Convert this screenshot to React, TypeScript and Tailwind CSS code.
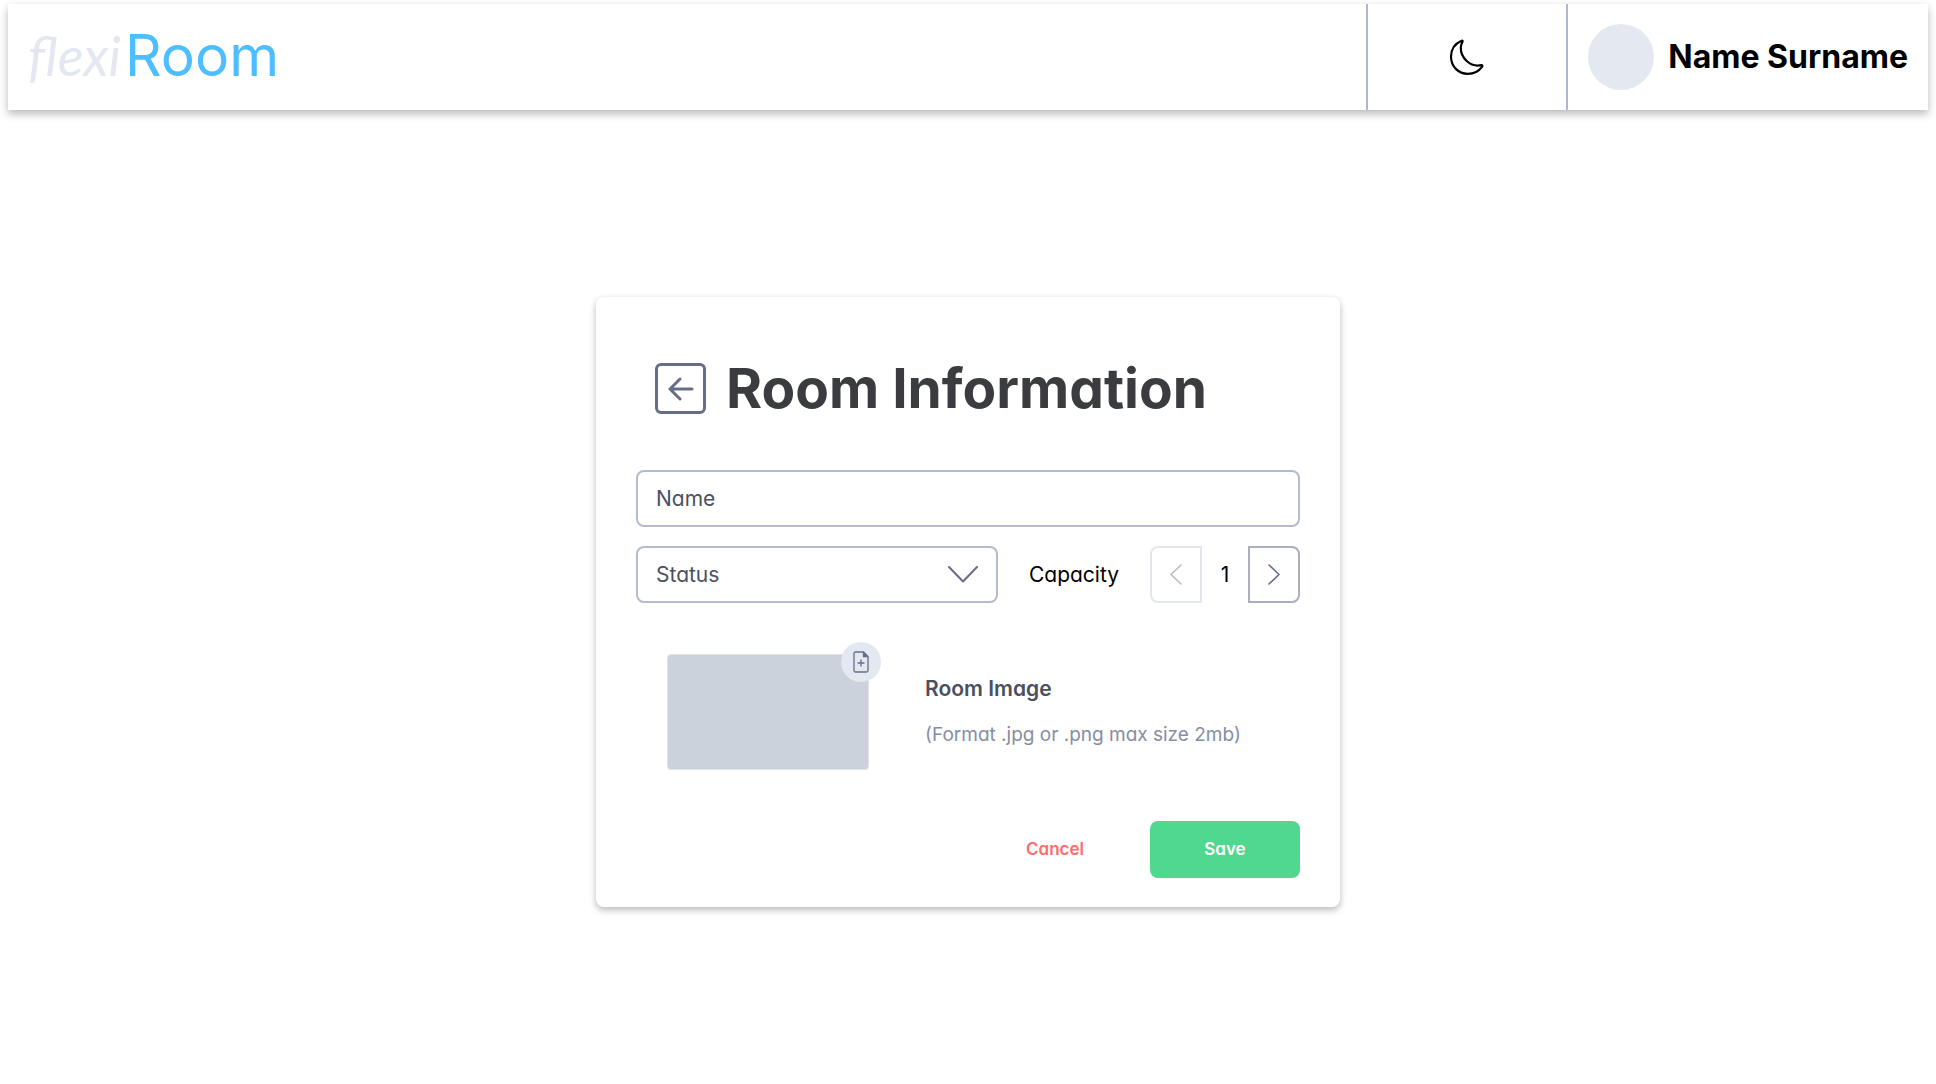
import { useState } from "react";

function Logo() {
  return (
    <a href="#" aria-label="flexiRoom" className="flex items-baseline gap-1 pl-5">
      <span className="font-['Lato'] text-[54px] leading-none font-normal italic text-[#e2e7f0]">flexi</span>
      <span className="font-['Inter'] text-[57px] leading-none text-[#4dbeff]">Room</span>
    </a>
  );
}

function Header() {
  return (
    <header className="mx-2 mt-1 flex h-[106px] items-stretch justify-between bg-white font-['Inter',sans-serif] shadow-[0_4px_8px_rgba(0,0,0,0.28)]">
      <div className="flex items-center pb-1">
        <Logo />
      </div>
      <div className="flex items-stretch">
        <button type="button" aria-label="Dark mode" className="flex w-[200px] items-center justify-center border-l-2 border-[#afb8ca]">
          <svg width="36" height="38" viewBox="0 0 36 38" fill="none" stroke="#000" strokeWidth="2.2" strokeLinejoin="round">
            <path d="M12.600 2.700C6 5.500 2 11.500 2 18.800 2 28.300 9.300 35.800 18.700 35.800c6 0 11.500-3 14.500-7.200.6-.9.100-1.600-.9-1.400C21 29.500 11.500 19.500 11.800 9.500c.1-2.300.8-4 1.700-5.700.5-1-.1-1.400-.9-1.100z" />
          </svg>
        </button>
        <div className="flex items-center gap-3.5 border-l-2 border-[#afb8ca] px-5">
          <div className="size-[66px] rounded-full bg-[#e3e8f1]" />
          <span className="text-[32px] font-bold whitespace-nowrap text-black">Name Surname</span>
        </div>
      </div>
    </header>
  );
}

export default function App() {
  const [capacity, setCapacity] = useState(1);
  return (
    <div className="flow-root min-h-screen bg-white">
      <Header />
      <main className="px-4 pt-[187px] pb-16 font-['Inter',sans-serif] [font-feature-settings:'cv11']">
        <form
          onSubmit={(e) => e.preventDefault()}
          className="mx-auto flex w-full max-w-[744px] flex-col rounded-lg bg-white px-10 pt-[66px] pb-[29px] shadow-[0_3px_7px_rgba(0,0,0,0.28)]"
        >
          <div className="flex items-center gap-5 pl-[19px]">
            <button type="button" aria-label="Back" className="flex size-[51px] shrink-0 items-center justify-center rounded-md border-3 border-[#666d8a]">
              <svg width="26" height="24" viewBox="0 0 26 24" fill="none" stroke="#666d8a" strokeWidth="3" strokeLinecap="round" strokeLinejoin="round">
                <path d="M24 12H2M12 2L2 12l10 10" />
              </svg>
            </button>
            <h1 className="text-[55px] leading-[51px] font-bold whitespace-nowrap text-[#3b3c40]">Room Information</h1>
          </div>

          <input
            type="text"
            aria-label="Name"
            placeholder="Name"
            className="mt-14 h-[57px] w-full rounded-lg border-2 border-[#b3bccc] px-[18px] text-[21px] text-[#4a5060] placeholder:text-[#4a5060]"
          />

          <div className="mt-[19px] flex items-center justify-between">
            <div className="relative w-[362px]">
              <select aria-label="Status" className="h-[57px] w-full appearance-none rounded-lg border-2 border-[#b3bccc] bg-white px-[18px] text-[21px] text-[#4a5060]">
                <option>Status</option>
              </select>
              <svg className="pointer-events-none absolute top-5 right-5" width="30" height="17" viewBox="0 0 30 17" fill="none" stroke="#666d8a" strokeWidth="2" strokeLinecap="round" strokeLinejoin="round">
                <path d="M1 1l14 14.500L29 1" />
              </svg>
            </div>
            <span id="capacity" className="text-[21px] text-black">Capacity</span>
            <div role="group" aria-labelledby="capacity" className="flex items-center">
              <button type="button" aria-label="Decrease" disabled={capacity <= 1} onClick={() => setCapacity(capacity - 1)} className="flex h-[57px] w-[52px] items-center justify-center rounded-l-lg border-2 border-[#e2e7ee]">
                <svg width="12" height="21" viewBox="0 0 12 21" fill="none" stroke="#b3bccc" strokeWidth="1.600" strokeLinecap="round" strokeLinejoin="round">
                  <path d="M11 1L1 10.500 11 20" />
                </svg>
              </button>
              <output className="w-[46px] text-center text-[21px] text-black">{capacity}</output>
              <button type="button" aria-label="Increase" onClick={() => setCapacity(capacity + 1)} className="flex h-[57px] w-[52px] items-center justify-center rounded-r-lg border-2 border-[#aaaec1]">
                <svg width="12" height="21" viewBox="0 0 12 21" fill="none" stroke="#666d8a" strokeWidth="1.600" strokeLinecap="round" strokeLinejoin="round">
                  <path d="M1 1l10 9.500L1 20" />
                </svg>
              </button>
            </div>
          </div>

          <div className="mt-[51px] flex items-center gap-14 pl-[31px]">
            <div className="relative h-[116px] w-[202px] shrink-0 rounded border border-[#dfe4eb] bg-[#cbd2dc]">
              <button type="button" aria-label="Add room image" className="absolute -top-[13px] -right-[13px] flex size-10 items-center justify-center rounded-full bg-[#e3e8f1]">
                <svg width="16" height="22" viewBox="0 0 16 22" fill="none" stroke="#666d8a" strokeWidth="1.300" strokeLinejoin="round">
                  <path d="M2.500 1h7.500l5 5v13.500a1.500 1.500 0 0 1-1.500 1.500h-11A1.500 1.500 0 0 1 1 19.500v-17A1.500 1.500 0 0 1 2.500 1z" />
                  <path d="M10.500 1v4.700H15z" fill="#666d8a" />
                  <path d="M8 9v6M5 12h6" strokeLinecap="round" />
                </svg>
              </button>
            </div>
            <div className="flex flex-col gap-[18px]">
              <h2 className="text-[21px] leading-7 font-semibold text-[#4a5060]">Room Image</h2>
              <p className="text-[19px] leading-7 whitespace-nowrap text-[#858ea3]">(Format .jpg or .png max size 2mb)</p>
            </div>
          </div>

          <div className="mt-[51px] flex items-center justify-end gap-[66px]">
            <button type="button" className="text-[17px] font-semibold text-[#ff6b6b]">Cancel</button>
            <button type="submit" className="h-[57px] w-[150px] rounded-lg bg-[#51d88f] text-[17px] font-semibold text-white">Save</button>
          </div>
        </form>
      </main>
    </div>
  );
}
